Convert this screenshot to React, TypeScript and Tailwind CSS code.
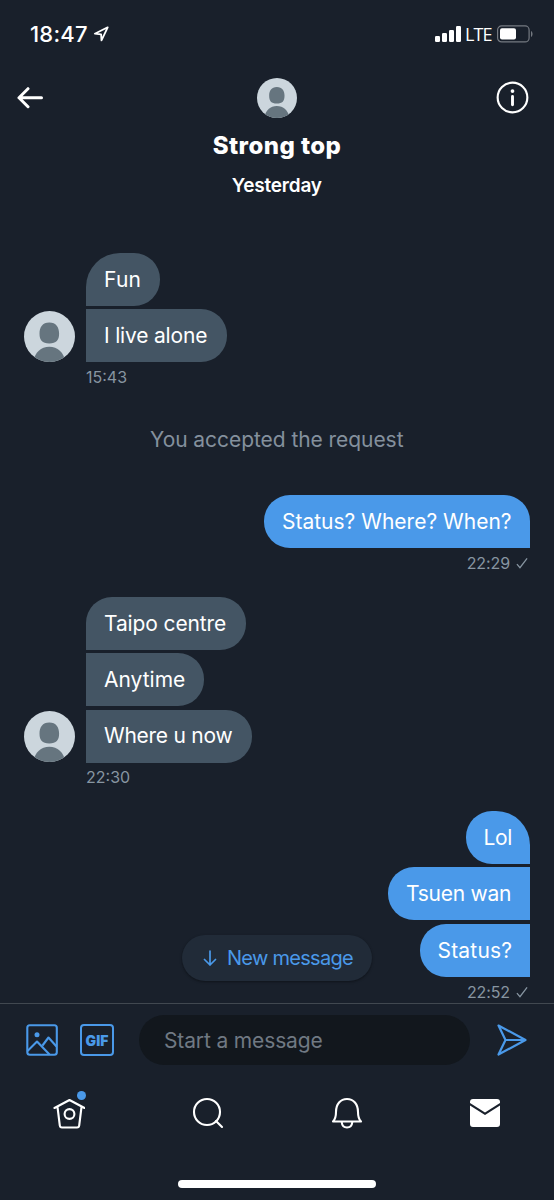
import React from "react";

function Avatar({ className }: { className: string }) {
  return (
    <svg viewBox="0 0 51 51" className={className}>
      <defs>
        <clipPath id="avatar-clip">
          <circle cx="25.5" cy="25.5" r="25.5" />
        </clipPath>
      </defs>
      <g clipPath="url(#avatar-clip)">
        <rect width="51" height="51" fill="#ccd6dd" />
        <path d="M25.300 11.500c6.800 0 9.800 4.800 9.800 11 0 6.800-2.700 9.900-9.800 9.900s-9.800-3.100-9.800-9.900c0-6.200 3-11 9.800-11z" fill="#66757f" />
        <path d="M9 51c2-10 8-15.300 16.300-15.300S39.600 41 41.600 51z" fill="#66757f" />
      </g>
    </svg>
  );
}

type BubbleProps = { text: string; shape: string; track: string };

function Incoming({ text, shape, track }: BubbleProps) {
  return (
    <div className={`flex h-[53px] items-center bg-[#445564] pl-[18px] text-[21px] whitespace-nowrap text-white ${shape}`}>
      <span className={track}>{text}</span>
    </div>
  );
}

function Outgoing({ text, shape, track }: BubbleProps) {
  return (
    <div className={`flex h-[53px] items-center bg-[#4a99e9] pl-[18px] text-[21px] whitespace-nowrap text-white ${shape}`}>
      <span className={track}>{text}</span>
    </div>
  );
}

function SentTime({ time }: { time: string }) {
  return (
    <div className="mt-[5px] flex h-5 items-center gap-[6px] pr-[2px] text-[16px] text-[#8795a1]">
      <span className="tracking-[-0.1px]">{time}</span>
      <svg viewBox="0 0 13 12" className="h-3 w-[12px]" fill="none" stroke="currentColor" strokeWidth="1.400">
        <path d="M1 7.200 4.300 11 12 1" />
      </svg>
    </div>
  );
}

export default function App() {
  return (
    <div className="flex h-[1200px] w-[554px] flex-col overflow-hidden bg-[#19202b] font-['Inter',sans-serif] text-white">
      <div className="flex h-[68px] shrink-0 items-center pl-[30px] pr-[21px]">
        <span className="w-[58px] text-[22px] font-medium tracking-[0.200px]">18:47</span>
        <svg viewBox="0 0 16 16" className="ml-[5px] h-4 w-4" fill="none" stroke="white" strokeWidth="1.800" strokeLinejoin="round">
          <path d="M14.700 1.300 1.800 7.700l6.300.700.400 6z" />
        </svg>
        <svg viewBox="0 0 26 16" className="ml-auto h-4 w-[26px]" fill="white">
          <rect x="0" y="10" width="5" height="6" rx="1.200" />
          <rect x="7" y="7" width="5" height="9" rx="1.200" />
          <rect x="14" y="4" width="5" height="12" rx="1.200" />
          <rect x="21" y="0" width="5" height="16" rx="1.200" />
        </svg>
        <span className="ml-[4px] w-[28px] font-['Open_Sans',sans-serif] text-[18px] font-medium tracking-[-0.900px]">LTE</span>
        <svg viewBox="0 0 36 18" className="ml-1 h-[18px] w-9">
          <rect x=".6" y=".9" width="31.500" height="16" rx="4" fill="none" stroke="#747981" strokeWidth="1.200" />
          <rect x="3" y="3.200" width="16" height="11.400" rx="2" fill="white" />
          <path d="M34 6c2 .8 2 5.200 0 6z" fill="#747981" />
        </svg>
      </div>

      <header className="grid h-[103px] shrink-0 grid-cols-[1fr_auto_1fr] items-start pl-[17px] pr-[25px]">
        <svg viewBox="0 0 26 24" className="mt-[18px] h-6 w-[26px]" fill="none" stroke="white" strokeWidth="3" strokeLinecap="round" strokeLinejoin="round">
          <path d="M24.500 11.700H2M11 2.700 2 11.700l9 9" />
        </svg>
        <div className="flex flex-col items-center pt-[10px] pl-[8px]">
          <Avatar className="h-10 w-10" />
          <h1 className="mt-[12px] text-[24px] leading-[32px] font-extrabold tracking-[0.450px]">Strong top</h1>
        </div>
        <svg viewBox="0 0 34 34" className="mt-[13px] h-[33px] w-[33px] justify-self-end" fill="none" stroke="white" strokeWidth="2.200">
          <circle cx="17" cy="17" r="15.300" />
          <path d="M17 16v8.500" strokeWidth="3" strokeLinecap="round" />
          <circle cx="17" cy="10.400" r="1.900" fill="white" stroke="none" />
        </svg>
      </header>

      <main className="relative flex h-[833px] shrink-0 flex-col border-b border-[#414850] pl-[23.500px] pr-6">
        <div className="flex h-7 items-center justify-center pt-[2px] text-[19px] font-semibold tracking-[-0.200px]">Yesterday</div>

        <section className="mt-[54px] flex items-end gap-[11.500px]">
          <Avatar className="mb-[25px] h-[51px] w-[51px]" />
          <div className="flex flex-col items-start gap-[3px]">
            <Incoming text="Fun" shape="w-[74px] rounded-tl-[34px] rounded-r-[26px]" track="tracking-[0.200px]" />
            <Incoming text="I live alone" shape="w-[141px] rounded-r-[26px]" track="tracking-[-0.180px]" />
            <time className="mt-[2px] h-5 text-[16px] leading-5 text-[#8795a1]">15:43</time>
          </div>
        </section>

        <p className="mt-[39px] h-7 text-center text-[21px] leading-7 tracking-[-0.060px] text-[#84909d]">You accepted the request</p>

        <section className="mt-[41px] flex flex-col items-end">
          <Outgoing text="Status? Where? When?" shape="w-[266px] rounded-l-[26px] rounded-tr-[26px]" track="" />
          <SentTime time="22:29" />
        </section>

        <section className="mt-[24px] flex items-end gap-[11.500px]">
          <Avatar className="mb-[25px] h-[51px] w-[51px]" />
          <div className="flex flex-col items-start gap-[3.300px]">
            <Incoming text="Taipo centre" shape="w-[160px] rounded-tl-[26px] rounded-r-[26px]" track="tracking-[-0.120px]" />
            <Incoming text="Anytime" shape="w-[118px] rounded-r-[26px]" track="" />
            <Incoming text="Where u now" shape="w-[165.500px] rounded-r-[26px]" track="tracking-[-0.260px]" />
            <time className="mt-[1px] h-5 text-[16px] leading-5 text-[#8795a1]">22:30</time>
          </div>
        </section>

        <section className="mt-[24px] flex flex-col items-end">
          <div className="flex flex-col items-end gap-[3.500px]">
            <Outgoing text="Lol" shape="w-[64.500px] rounded-l-[26px] rounded-tr-[34px]" track="tracking-[-0.400px]" />
            <Outgoing text="Tsuen wan" shape="w-[142px] rounded-l-[26px]" track="tracking-[-0.250px]" />
            <Outgoing text="Status?" shape="w-[110.500px] rounded-l-[26px]" track="tracking-[0.200px]" />
          </div>
          <SentTime time="22:52" />
        </section>

        <button className="absolute bottom-[22px] left-[182px] flex h-[46px] w-[190px] items-center rounded-full bg-[#212b38] pl-[21px] text-[20px] text-[#4a99e9] shadow-sm shadow-black/30">
          <svg viewBox="0 0 14 16" className="h-4 w-[14px] shrink-0" fill="none" stroke="currentColor" strokeWidth="1.700" strokeLinecap="round" strokeLinejoin="round">
            <path d="M7 1v14M1.500 9.500 7 15l5.500-5.500" />
          </svg>
          <span className="ml-[10px] tracking-[-0.720px] whitespace-nowrap">New message</span>
        </button>
      </main>

      <div className="flex h-[72px] shrink-0 items-center pl-[26px] pr-[27px]">
        <svg viewBox="0 0 32 32" className="h-8 w-8" fill="none" stroke="#4a99e9" strokeWidth="2.100">
          <rect x="1.300" y="1.300" width="29.500" height="29.500" rx="2.500" />
          <path d="M1.500 27 11 17.500 23.500 30.500M16.500 21.500l6-8 8 9" strokeLinejoin="round" />
          <circle cx="11" cy="10.700" r="2.500" fill="#4a99e9" stroke="none" />
        </svg>
        <div className="ml-[22px] flex h-8 w-[34px] items-center justify-center rounded-[4px] border-2 border-[#4a99e9] text-[14px] font-black tracking-[0px] text-[#4a99e9]">GIF</div>
        <div className="ml-[25px] flex h-[50px] w-[331px] items-center rounded-full bg-[#12171d] pt-[2px] pl-[25px] text-[21px] text-[#707983]">
          <span className="tracking-[-0.140px]">Start a message</span>
        </div>
        <svg viewBox="0 0 30 32" className="ml-auto h-8 w-[30px]" fill="none" stroke="#4a99e9" strokeWidth="2.200" strokeLinejoin="round">
          <path d="M1.500 1.500 28.500 16 1.500 30.500 8.500 16zM8.500 16h20" />
        </svg>
      </div>

      <nav className="flex h-[74px] shrink-0 items-center justify-between pr-[54px] pl-[53px]">
        <div className="relative">
          <svg viewBox="0 0 32 32" className="h-8 w-8" fill="none" stroke="white" strokeWidth="2.100" strokeLinecap="round" strokeLinejoin="round">
            <path d="M1.500 11 16.500 3l15 8M4.500 10l2.300 18.500q.2 2 2.200 2h15q2 0 2.200-2L28.500 10" />
            <circle cx="16.500" cy="17" r="4.900" />
          </svg>
          <span className="absolute top-[-6px] right-[-1px] h-[9px] w-[9px] rounded-full bg-[#4a99e9]" />
        </div>
        <svg viewBox="0 0 32 32" className="h-8 w-8" fill="none" stroke="white" strokeWidth="2.100" strokeLinecap="round">
          <circle cx="15" cy="15" r="13" />
          <path d="m24 24 6 6" />
        </svg>
        <svg viewBox="0 0 32 32" className="h-8 w-8" fill="none" stroke="white" strokeWidth="2.100" strokeLinecap="round" strokeLinejoin="round">
          <path d="M2 24.500c2-2 3-5 3-9.500C5 7 9.500 2 16 2s11 5 11 13c0 4.500 1 7.500 3 9.500z" />
          <path d="M10.700 25c.3 3.500 2.200 5.500 5.300 5.500s5-2 5.300-5.500" />
        </svg>
        <svg viewBox="0 0 30 28" className="h-7 w-[30px]">
          <path d="M3 0h24q3 0 3 3v1L15 13.600 0 4V3q0-3 3-3z" fill="white" />
          <path d="m0 6.500 15 9.500 15-9.500V25q0 3-3 3H3q-3 0-3-3z" fill="white" />
        </svg>
      </nav>
      <div className="flex flex-1 items-start justify-center pt-[30px]">
        <div className="h-[8px] w-[198px] rounded-full bg-white" />
      </div>
    </div>
  );
}
